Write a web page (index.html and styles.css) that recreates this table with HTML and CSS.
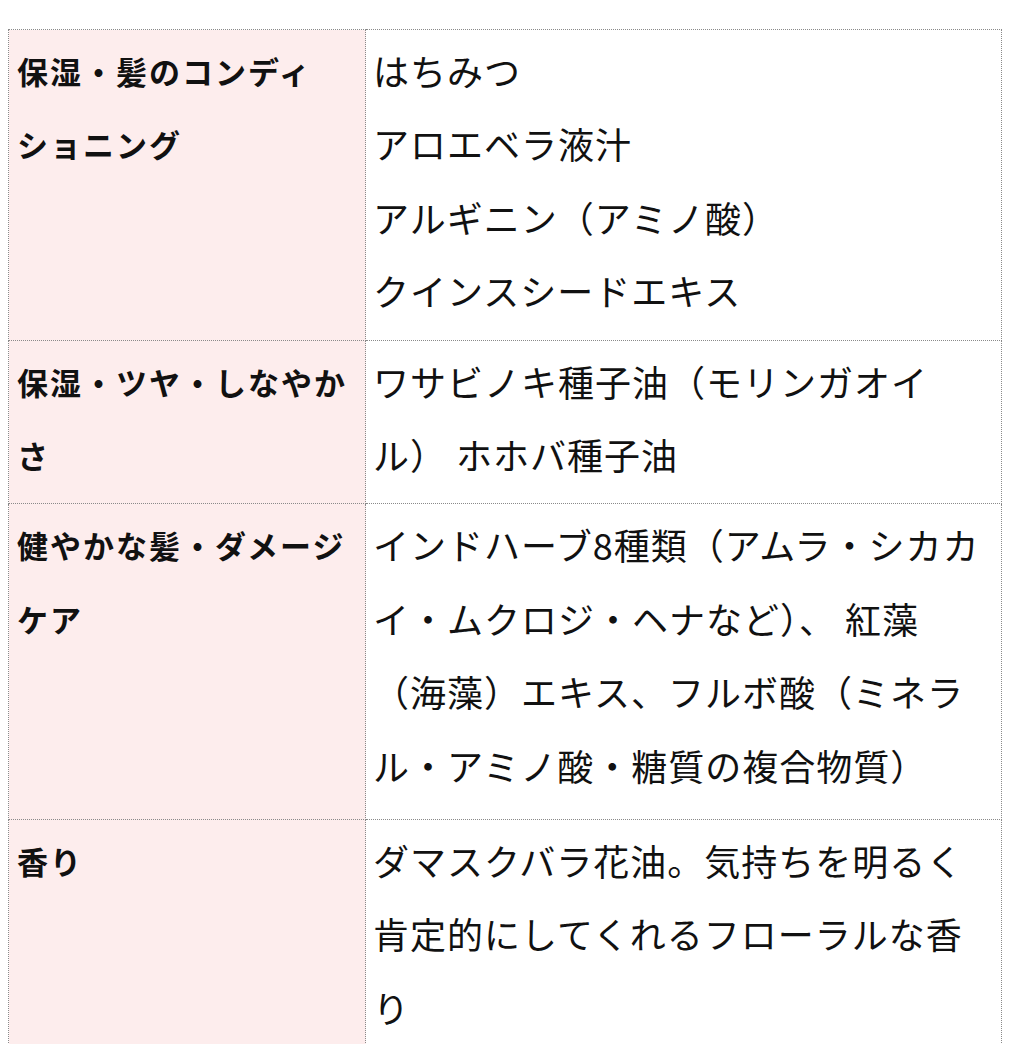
FILE: index.html
```html
<!DOCTYPE html>
<html lang="ja">
<head>
<meta charset="utf-8">
<link rel="stylesheet" href="styles.css">
</head>
<body>
<table class="spec">
  <tr>
    <th class="label">保湿・髪のコンディショニング</th>
    <td class="value">はちみつ<br>アロエベラ液汁<br>アルギニン（アミノ酸）<br>クインスシードエキス</td>
  </tr>
  <tr>
    <th class="label">保湿・ツヤ・しなやかさ</th>
    <td class="value">ワサビノキ種子油（モリンガオイル） ホホバ種子油</td>
  </tr>
  <tr class="tall">
    <th class="label">健やかな髪・ダメージケア</th>
    <td class="value">インドハーブ8種類（アムラ・シカカイ・ムクロジ・ヘナなど）、 紅藻（海藻）エキス、フルボ酸（ミネラル・アミノ酸・糖質の複合物質）</td>
  </tr>
  <tr>
    <th class="label">香り</th>
    <td class="value">ダマスクバラ花油。気持ちを明るく肯定的にしてくれるフローラルな香り</td>
  </tr>
</table>
</body>
</html>
```
FILE: styles.css
```css
html, body {
  margin: 0;
  padding: 0;
  background: #ffffff;
}
body {
  font-family: "Noto Sans CJK JP", "Noto Sans", sans-serif;
  color: #111111;
}
.spec {
  margin: 29px 0 0 8px;
  width: 994px;
  border-collapse: collapse;
  table-layout: fixed;
}
.spec th, .spec td {
  border: 1px dotted #8a8a8a;
  vertical-align: top;
  text-align: left;
  line-height: 73.4px;
  padding: 4px 0 12px 0;
  word-break: normal;
  line-break: strict;
}
.label {
  width: 348px;
  padding-left: 8px !important;
  background: #fdeded;
  font-size: 31px;
  font-weight: 700;
  letter-spacing: 2px;
}
.value {
  padding-left: 7px !important;
  padding-right: 14px !important;
  font-size: 36px;
  font-weight: 400;
  letter-spacing: 1px;
}
.tall .value {
  padding-bottom: 17px;
}
```
